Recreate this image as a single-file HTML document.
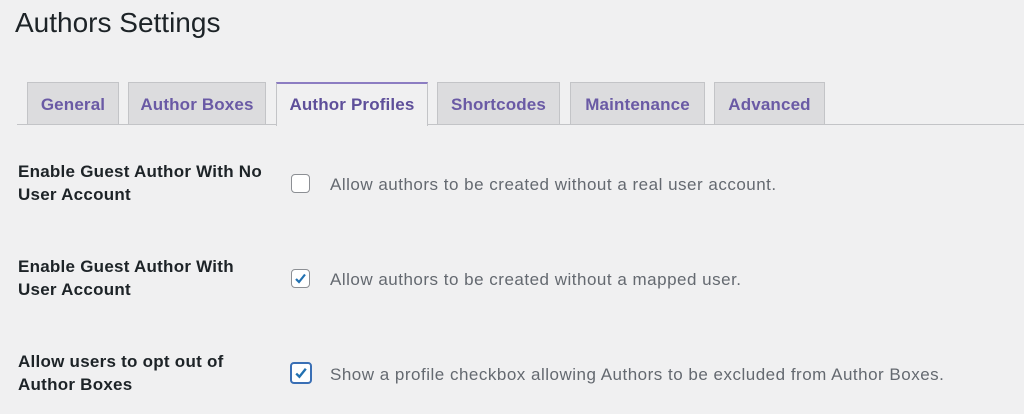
<!DOCTYPE html>
<html><head><style>
body{margin:0;width:1024px;height:414px;background:#f0f0f1;font-family:"Liberation Sans",sans-serif;position:relative;overflow:hidden;color:#1d2327}
h1{position:absolute;left:15px;top:7px;margin:0;font-weight:400;font-size:28px;color:#1d2327}
.line{position:absolute;left:17px;right:0;top:124px;height:1px;background:#c3c4c7}
.tab{position:absolute;top:82px;height:42px;background:#dcdcde;border:1px solid #c3c4c7;border-bottom:none;box-sizing:border-box;color:#6a5aa5;font-weight:700;font-size:17px;letter-spacing:0.15px;text-align:center;line-height:43px}
.tab.act{background:#f0f0f1;border-top:2px solid #8c7dc2;height:44px;color:#5e4f9a;line-height:41px}
.lab{position:absolute;left:18px;font-weight:700;font-size:17px;letter-spacing:0.25px;line-height:23px;color:#1d2327}
.desc{position:absolute;left:330px;font-size:17px;letter-spacing:0.5px;color:#646970}
.cb{position:absolute;width:19px;height:19px;border:1px solid #8c8f94;border-radius:4px;background:#fff;box-sizing:border-box}
.cb svg{position:absolute;left:1px;top:1px}
</style></head><body>
<h1>Authors Settings</h1>
<div class="line"></div>
<div class="tab" style="left:27px;width:92px">General</div>
<div class="tab" style="left:128px;width:138px">Author Boxes</div>
<div class="tab act" style="left:276px;width:152px">Author Profiles</div>
<div class="tab" style="left:437px;width:123px">Shortcodes</div>
<div class="tab" style="left:570px;width:135px">Maintenance</div>
<div class="tab" style="left:714px;width:111px">Advanced</div>

<div class="lab" style="top:160px">Enable Guest Author With No<br>User Account</div>
<div class="cb" style="left:291px;top:174px"></div>
<div class="desc" style="top:175px">Allow authors to be created without a real user account.</div>

<div class="lab" style="top:255px">Enable Guest Author With<br>User Account</div>
<div class="cb" style="left:291px;top:269px"><svg width="15" height="15" viewBox="0 0 15 15"><path d="M3 8 L6 11 L12 3.5" fill="none" stroke="#2271b1" stroke-width="2.2"/></svg></div>
<div class="desc" style="top:270px">Allow authors to be created without a mapped user.</div>

<div class="lab" style="top:350px">Allow users to opt out of<br>Author Boxes</div>
<div class="cb" style="left:290px;top:362px;width:22px;height:22px;border:2px solid #3a6fb5"><svg width="16" height="16" viewBox="0 0 15 15"><path d="M3 8 L6 11 L12 3.5" fill="none" stroke="#2271b1" stroke-width="2.2"/></svg></div>
<div class="desc" style="top:365px">Show a profile checkbox allowing Authors to be excluded from Author Boxes.</div>
</body></html>
